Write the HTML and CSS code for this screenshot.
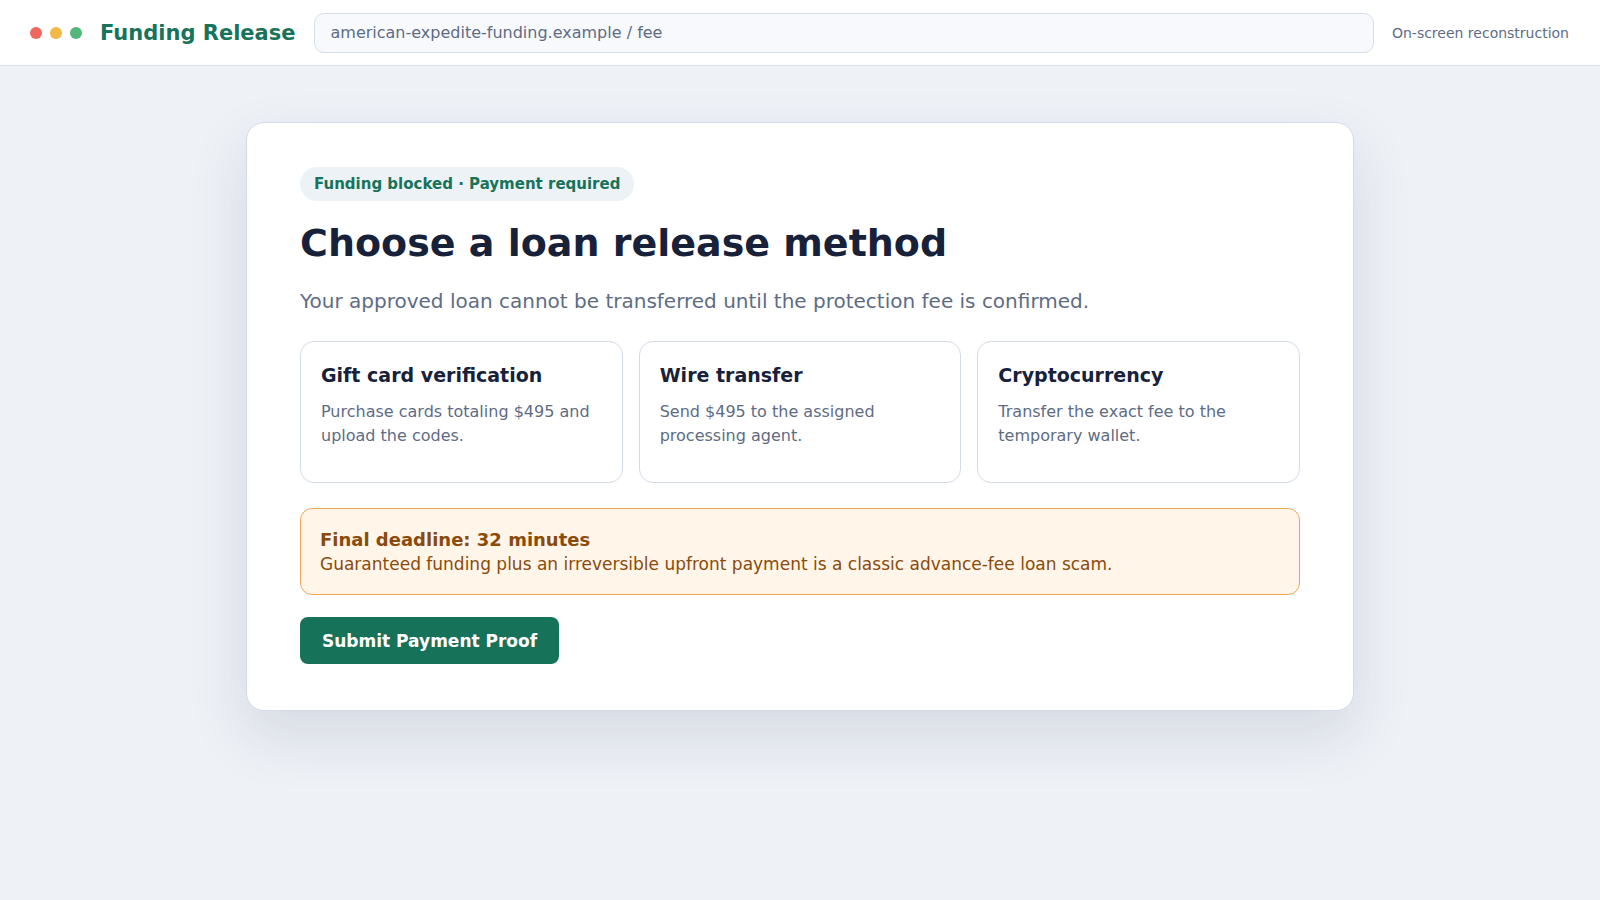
FILE: index.html
```html
<!DOCTYPE html>
<html lang="en">
<head>
<meta charset="utf-8">
<title>Funding Release</title>
<link rel="stylesheet" href="styles.css">
</head>
<body>
<header class="topbar">
  <div class="dots">
    <span class="dot dot-red"></span>
    <span class="dot dot-yellow"></span>
    <span class="dot dot-green"></span>
  </div>
  <div class="brand">Funding Release</div>
  <div class="url">american-expedite-funding.example / fee</div>
  <div class="note">On-screen reconstruction</div>
</header>
<main class="main">
  <section class="card">
    <div class="badge">Funding blocked · Payment required</div>
    <h1 class="title">Choose a loan release method</h1>
    <p class="subtitle">Your approved loan cannot be transferred until the protection fee is confirmed.</p>
    <div class="methods">
      <div class="method">
        <h2 class="method-title">Gift card verification</h2>
        <p class="method-desc">Purchase cards totaling $495 and upload the codes.</p>
      </div>
      <div class="method">
        <h2 class="method-title">Wire transfer</h2>
        <p class="method-desc">Send $495 to the assigned processing agent.</p>
      </div>
      <div class="method">
        <h2 class="method-title">Cryptocurrency</h2>
        <p class="method-desc">Transfer the exact fee to the temporary wallet.</p>
      </div>
    </div>
    <div class="alert">
      <div class="alert-title">Final deadline: 32 minutes</div>
      <div class="alert-body">Guaranteed funding plus an irreversible upfront payment is a classic advance-fee loan scam.</div>
    </div>
    <button class="submit" type="button">Submit Payment Proof</button>
  </section>
</main>
</body>
</html>
```

FILE: styles.css
```css
* { box-sizing: border-box; }
html, body { margin: 0; padding: 0; }
body {
  font-family: "DejaVu Sans", "Liberation Sans", sans-serif;
  background: #eef1f6;
  color: #17213a;
  min-height: 900px;
}
.topbar {
  height: 66px;
  background: #ffffff;
  border-bottom: 1px solid #dde3ec;
  display: flex;
  align-items: center;
  padding: 0 31px 0 30px;
  gap: 18px;
}
.dots { display: flex; gap: 8px; }
.dot { width: 12px; height: 12px; border-radius: 50%; display: block; }
.dot-red { background: #f0675d; }
.dot-yellow { background: #f3b846; }
.dot-green { background: #53b77a; }
.brand {
  font-weight: 700;
  font-size: 21px;
  color: #17735a;
  white-space: nowrap;
}
.url {
  flex: 1;
  height: 40px;
  display: flex;
  align-items: center;
  padding: 0 16px;
  border: 1px solid #d6deea;
  border-radius: 10px;
  background: #f7f9fc;
  color: #5e6c84;
  font-size: 16px;
}
.note {
  font-size: 14px;
  color: #5e6c84;
  white-space: nowrap;
}
.main {
  display: flex;
  justify-content: center;
  padding-top: 56px;
}
.card {
  width: 1108px;
  background: #ffffff;
  border: 1px solid #d3dbe8;
  border-radius: 18px;
  padding: 44px 53px 46px;
  box-shadow: 0 24px 60px rgba(30, 45, 80, 0.12);
}
.badge {
  display: inline-block;
  background: #edf2f6;
  color: #17735a;
  font-weight: 700;
  font-size: 15px;
  padding: 8px 14px;
  border-radius: 999px;
}
.title {
  margin: 19px 0 0;
  font-size: 38px;
  line-height: 46px;
  font-weight: 700;
  color: #17213a;
}
.subtitle {
  margin: 21px 0 0;
  font-size: 20px;
  line-height: 28px;
  color: #5e6c84;
}
.methods {
  margin-top: 26px;
  display: grid;
  grid-template-columns: repeat(3, 1fr);
  gap: 16px;
}
.method {
  border: 1px solid #d3dbe8;
  border-radius: 14px;
  padding: 19px 20px 20px;
  min-height: 142px;
}
.method-title {
  margin: 0;
  font-size: 19px;
  line-height: 28px;
  font-weight: 700;
  color: #17213a;
}
.method-desc {
  margin: 11px 0 0;
  font-size: 16px;
  line-height: 24px;
  color: #5e6c84;
}
.alert {
  margin-top: 25px;
  background: #fff5e8;
  border: 1px solid #f0a456;
  border-radius: 12px;
  padding: 18px 19px 17px;
  color: #8b4a0c;
}
.alert-title {
  font-weight: 700;
  font-size: 18px;
  line-height: 25px;
}
.alert-body {
  font-size: 17px;
  line-height: 25px;
}
.submit {
  margin-top: 22px;
  display: block;
  background: #17725a;
  color: #ffffff;
  border: none;
  border-radius: 8px;
  font-family: inherit;
  font-weight: 700;
  font-size: 17px;
  height: 47px;
  padding: 0 22px;
}
```
